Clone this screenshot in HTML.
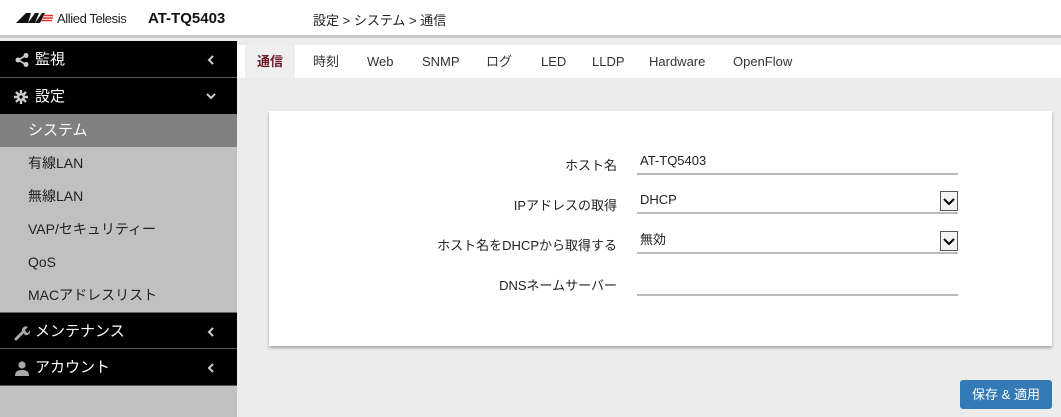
<!DOCTYPE html>
<html><head><meta charset="utf-8"><style>
*{margin:0;padding:0;box-sizing:border-box}
body{width:1061px;height:417px;overflow:hidden;background:#ececec;font-family:"Liberation Sans","Noto Sans CJK JP",sans-serif;position:relative;font-size:13px;color:#222}
.hdr{position:absolute;left:0;top:0;width:1061px;height:38px;background:#fff;border-bottom:3px solid #c8c8c8}
.side{position:absolute;left:0;top:41px;width:237px;height:376px;background:#c0c0c0}
.it{position:absolute;left:0;width:237px;color:#fff;font-size:15px}
.blk{background:#000;height:37px;line-height:37px;border-bottom:1px solid #555}
.sub{height:33px;line-height:33px;padding-left:28px;color:#222;font-size:14px}
.chev{position:absolute;right:22px;top:14px}
.ic{position:absolute;left:14px;top:11px}
.tabs{position:absolute;left:237px;top:45px;width:824px;height:33px;background:#fff}
.tab{position:absolute;top:0;height:33px;line-height:33px;font-size:13px;color:#333}
.card{position:absolute;left:269px;top:111px;width:783px;height:235px;background:#fff;box-shadow:0 2px 3px rgba(0,0,0,.3)}
.lab{position:absolute;right:435px;font-size:13px;color:#222}
.fld{position:absolute;left:368px;width:321px;height:24px;border-bottom:2px solid #bbb;font-size:13px;padding-left:3px;line-height:20px}
.sel{position:absolute;right:0;top:1px;width:18px;height:20px;border:1px solid #555;background:#f4f4f4}
.btn{position:absolute;left:960px;top:380px;width:92px;height:29px;background:#337ab7;border-radius:3px;color:#fff;font-size:13px;text-align:center;line-height:29px}
</style></head><body>
<div class="hdr">
<svg style="position:absolute;left:16px;top:13px" width="38" height="10" viewBox="0 0 38 10"><path d="M0 10L10 0h5L12 10z" fill="#111"/><path d="M12 10l7-10h4l-4 10z" fill="#111"/><path d="M19 10l7-10h3l-5 10z" fill="#111"/><path d="M27 2.5h10M26 5h11M25 7.5h11" stroke="#d33" stroke-width="1.5"/></svg>
<span style="position:absolute;left:57px;top:11px;font-size:13px;color:#222;letter-spacing:-0.4px">Allied Telesis</span>
<span style="position:absolute;left:148px;top:10px;font-size:15px;font-weight:bold;color:#111">AT-TQ5403</span>
<span style="position:absolute;left:313px;top:10px;font-size:13px;color:#222">設定 &gt; システム &gt; 通信</span>
</div>
<div class="side">
<div class="it blk" style="top:0"><svg class="ic" width="16" height="16" viewBox="0 0 16 16"><circle cx="4" cy="8" r="2.5" fill="#ccc"/><circle cx="12" cy="3.5" r="2.5" fill="#ccc"/><circle cx="12" cy="12.5" r="2.5" fill="#ccc"/><path d="M4 8L12 3.5M4 8l8 4.5" stroke="#ccc" stroke-width="1.6"/></svg><span style="position:absolute;left:35px">監視</span><svg class="chev" width="8" height="10"><path d="M6 1L2 5l4 4" stroke="#ccc" stroke-width="2" fill="none"/></svg></div>
<div class="it blk" style="top:37px"><svg class="ic" style="top:12px" width="14" height="14" viewBox="0 0 14 14"><path d="M7 0v14M0 7h14M2 2l10 10M12 2L2 12" stroke="#ccc" stroke-width="2.4"/><circle cx="7" cy="7" r="4" fill="#ccc"/><circle cx="7" cy="7" r="1.6" fill="#000"/></svg><span style="position:absolute;left:35px">設定</span><svg class="chev" style="right:21px" width="10" height="8"><path d="M1 2l4 4 4-4" stroke="#ccc" stroke-width="2" fill="none"/></svg></div>
<div class="it sub" style="top:73px;background:#808080;color:#fff;font-size:15px">システム</div>
<div class="it sub" style="top:106px">有線LAN</div>
<div class="it sub" style="top:139px">無線LAN</div>
<div class="it sub" style="top:172px">VAP/セキュリティー</div>
<div class="it sub" style="top:205px">QoS</div>
<div class="it sub" style="top:238px">MACアドレスリスト</div>
<div class="it blk" style="top:271px;border-top:1px solid #666"><svg class="ic" style="top:12px" width="16" height="16" viewBox="0 0 16 16"><path d="M2 14l7-7" stroke="#aaa" stroke-width="3" stroke-linecap="round"/><path d="M8 6a4 4 0 0 1 6-4l-3 3 1 2 2 1 2-3a4 4 0 0 1-5 5z" fill="#aaa"/></svg><span style="position:absolute;left:35px">メンテナンス</span><svg class="chev" width="8" height="10"><path d="M6 1L2 5l4 4" stroke="#ccc" stroke-width="2" fill="none"/></svg></div>
<div class="it blk" style="top:308px"><svg class="ic" style="top:11px" width="16" height="16" viewBox="0 0 16 16"><circle cx="8" cy="5" r="3.6" fill="#aaa"/><path d="M1 16c0-5 3-6 7-6s7 1 7 6z" fill="#aaa"/></svg><span style="position:absolute;left:35px">アカウント</span><svg class="chev" width="8" height="10"><path d="M6 1L2 5l4 4" stroke="#ccc" stroke-width="2" fill="none"/></svg></div>
</div>
<div class="tabs">
<div class="tab" style="left:8px;width:50px;background:#efefef;color:#6b1b2b;font-weight:bold;text-align:center">通信</div>
<div class="tab" style="left:76px">時刻</div>
<div class="tab" style="left:130px">Web</div>
<div class="tab" style="left:185px">SNMP</div>
<div class="tab" style="left:249px">ログ</div>
<div class="tab" style="left:304px">LED</div>
<div class="tab" style="left:355px">LLDP</div>
<div class="tab" style="left:412px">Hardware</div>
<div class="tab" style="left:496px">OpenFlow</div>
</div>
<div class="card">
<div class="lab" style="top:44px">ホスト名</div><div class="fld" style="top:40px">AT-TQ5403</div>
<div class="lab" style="top:84px">IPアドレスの取得</div><div class="fld" style="top:79px">DHCP<div class="sel"><svg width="16" height="18"><path d="M3 7l5 5 5-5" stroke="#000" stroke-width="2" fill="none"/></svg></div></div>
<div class="lab" style="top:124px">ホスト名をDHCPから取得する</div><div class="fld" style="top:119px">無効<div class="sel"><svg width="16" height="18"><path d="M3 7l5 5 5-5" stroke="#000" stroke-width="2" fill="none"/></svg></div></div>
<div class="lab" style="top:164px">DNSネームサーバー</div><div class="fld" style="top:161px"></div>
</div>
<div class="btn">保存 &amp; 適用</div>
</body></html>
